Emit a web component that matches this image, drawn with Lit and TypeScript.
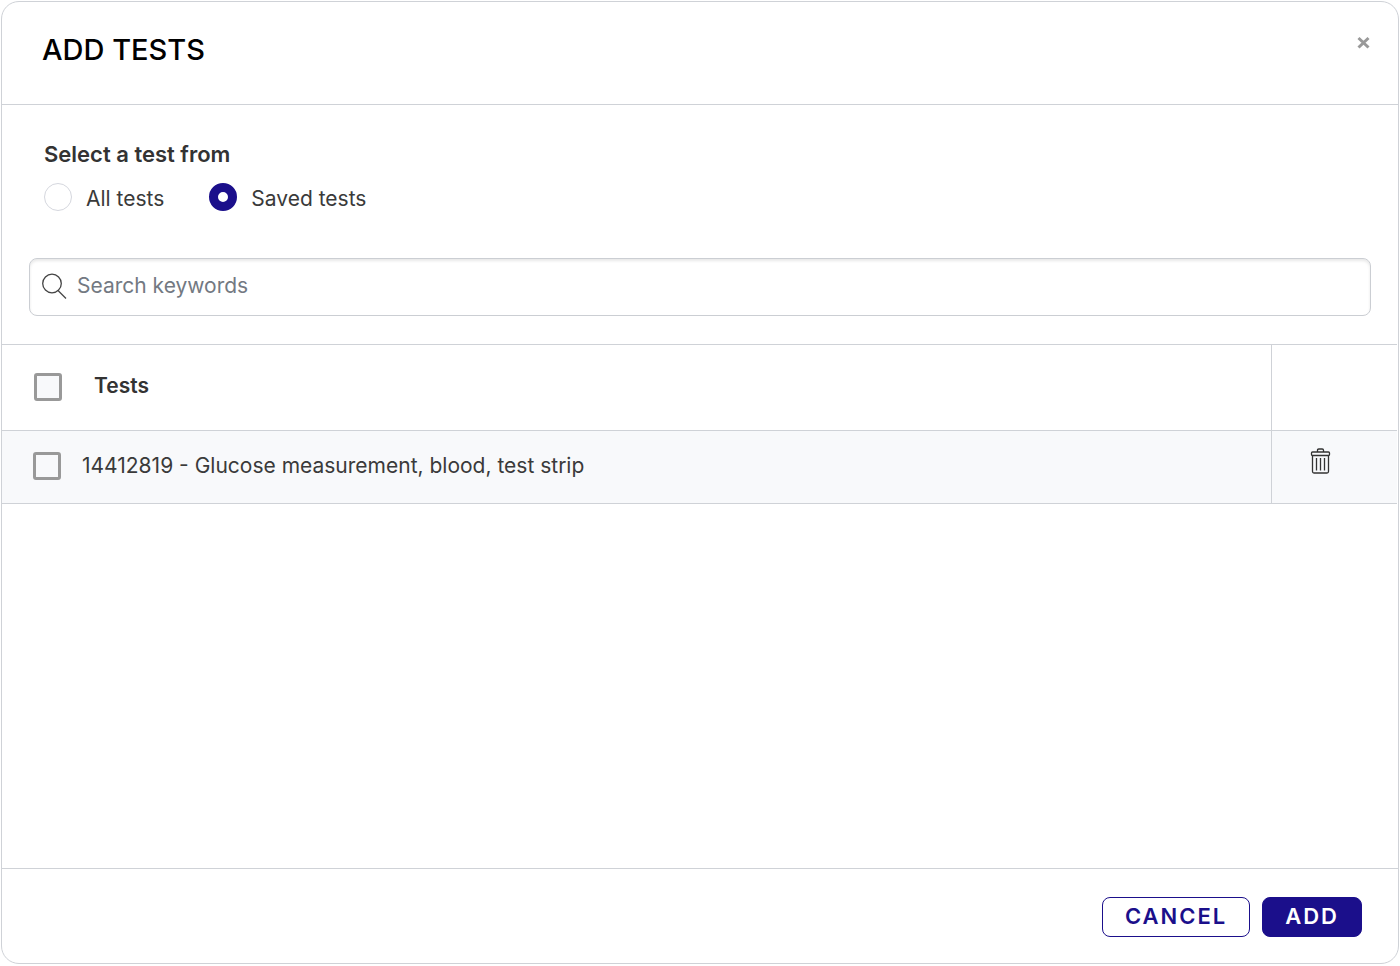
import { LitElement, html, css } from "lit";
import { customElement, property, state } from "lit/decorators.js";

interface TestItem {
  code: string;
  name: string;
}

@customElement("test-table")
class TestTable extends LitElement {
  @property({ attribute: false }) tests: TestItem[] = [];

  static styles = css`
    :host {
      display: block;
      border-top: 1px solid #cfd2d7;
      margin-right: 1px;
    }
    table {
      width: 100%;
      border-collapse: separate;
      border-spacing: 0;
      table-layout: fixed;
    }
    th,
    td {
      padding: 0;
      text-align: left;
      border-bottom: 1px solid #cfd2d7;
      font-size: 21px;
      line-height: 28px;
      color: #333;
    }
    .action {
      width: 125px;
      border-left: 1px solid #cfd2d7;
    }
    .head,
    .item {
      display: flex;
      align-items: center;
      box-sizing: border-box;
      padding-bottom: 2px;
    }
    .head {
      height: 85px;
      padding-left: 32px;
      gap: 32px;
      font-weight: 600;
    }
    .item {
      height: 72px;
      padding-left: 31px;
      gap: 21px;
    }
    tbody td {
      background: #f8f9fb;
      color: #3a3a3a;
    }
    .label {
      padding-bottom: 1px;
    }
    .box {
      appearance: none;
      flex: none;
      width: 28px;
      height: 28px;
      margin: 0;
      border: 3px solid #999;
      border-radius: 3px;
      background: #f8f9fb;
    }
    .box:checked {
      background: #1b0f8b;
    }
    .delete {
      display: block;
      margin: 0 0 10px 38px;
      padding: 0;
      border: 0;
      background: none;
      line-height: 0;
      cursor: pointer;
    }
  `;

  render() {
    return html`
      <table>
        <thead>
          <tr>
            <th>
              <div class="head">
                <input class="box" type="checkbox" id="all" aria-label="Select all tests" />
                <label class="label" for="all">Tests</label>
              </div>
            </th>
            <th class="action"></th>
          </tr>
        </thead>
        <tbody>
          ${this.tests.map(
            (t) => html`
              <tr>
                <td>
                  <div class="item">
                    <input class="box" type="checkbox" id="t${t.code}" />
                    <label class="label" for="t${t.code}">${t.code} - ${t.name}</label>
                  </div>
                </td>
                <td class="action">
                  <button class="delete" type="button" aria-label="Delete test">
                    <svg width="21" height="28" viewBox="0 0 21 28" fill="none" stroke="#333">
                      <path d="M7.5 4V2.3Q7.5 1 8.8 1H12.2Q13.5 1 13.5 2.3V4" stroke-width="1.3" />
                      <rect x="1.5" y="4" width="18" height="3.5" rx="1" stroke-width="1.3" />
                      <path d="M2.5 7.5V23.5Q2.5 25 4 25H17Q18.5 25 18.5 23.5V7.5" stroke-width="1.3" />
                      <path d="M6.5 10V22.5M10.5 10V22.5M14.5 10V22.5" stroke-width="1.3" />
                    </svg>
                  </button>
                </td>
              </tr>
            `
          )}
        </tbody>
      </table>
    `;
  }
}

@customElement("app-root")
class AppRoot extends LitElement {
  @state() private source = "saved";

  private tests: TestItem[] = [
    { code: "14412819", name: "Glucose measurement, blood, test strip" },
  ];

  static styles = css`
    :host {
      display: flex;
      box-sizing: border-box;
      min-height: 100vh;
      padding: 1px 1px 2px;
      background: #fff;
      color: #3a3a3a;
      font-family: Inter, "Liberation Sans", sans-serif;
      font-size: 21px;
      line-height: 28px;
    }
    .dialog {
      flex: 1;
      display: flex;
      flex-direction: column;
      border: 1px solid #cfd2d7;
      border-radius: 18px;
      overflow: hidden;
    }
    header {
      display: flex;
      justify-content: space-between;
      align-items: flex-start;
      padding: 30px 28px 36px 40px;
      border-bottom: 1px solid #cfd2d7;
    }
    h1 {
      margin: 0;
      font-size: 29px;
      line-height: 36px;
      font-weight: 500;
      color: #000;
    }
    button {
      font-family: inherit;
      cursor: pointer;
    }
    .close {
      margin-top: 4px;
      padding: 0;
      border: 0;
      background: none;
      line-height: 0;
    }
    main {
      flex: 1;
    }
    fieldset {
      margin: 0;
      padding: 35px 42px 0;
      border: 0;
    }
    legend {
      float: left;
      width: 100%;
      padding: 0;
      font-size: 22px;
      font-weight: 600;
      color: #333;
    }
    .options {
      clear: both;
      display: flex;
      gap: 45px;
      padding-top: 15px;
    }
    .option {
      display: flex;
      gap: 14px;
    }
    .option span {
      padding-top: 2px;
    }
    .option input {
      appearance: none;
      width: 28px;
      height: 28px;
      margin: 0;
      border: 1px solid #d5d7de;
      border-radius: 50%;
      background: #fff;
    }
    .option input:checked {
      border: 9px solid #1b0f8b;
    }
    .search {
      display: flex;
      align-items: center;
      gap: 8px;
      height: 56px;
      margin: 45px 27px 28px;
      padding: 0 10px;
      border: 1px solid #cbced3;
      border-radius: 8px;
      box-shadow: inset 0 2px 3px #00000018;
    }
    .search svg {
      flex: none;
    }
    .search input {
      flex: 1;
      min-width: 0;
      padding: 0 0 2px;
      border: 0;
      outline: 0;
      background: none;
      font: inherit;
      color: #3a3a3a;
    }
    .search input::placeholder {
      color: #737982;
      opacity: 1;
    }
    footer {
      display: flex;
      justify-content: flex-end;
      gap: 12px;
      padding: 28px 36px 26px;
      border-top: 1px solid #cfd2d7;
    }
    .btn {
      height: 40px;
      padding: 0 22px 2px;
      border: 1px solid #1b0f8b;
      border-radius: 8px;
      background: #fff;
      color: #1b0f8b;
      font-size: 22px;
      font-weight: 600;
      letter-spacing: 2px;
    }
    .primary {
      background: #1b0f8b;
      color: #fff;
    }
  `;

  private option(value: string, label: string) {
    return html`
      <label class="option">
        <input
          type="radio"
          name="source"
          value=${value}
          .checked=${this.source === value}
          @change=${() => (this.source = value)}
        />
        <span>${label}</span>
      </label>
    `;
  }

  render() {
    return html`
      <section class="dialog" role="dialog" aria-labelledby="title">
        <header>
          <h1 id="title">ADD TESTS</h1>
          <button class="close" type="button" aria-label="Close">
            <svg width="13" height="13" viewBox="0 0 13 13" stroke="#999" stroke-width="3">
              <path d="M1.5 2L11.5 11.5M11.5 2L1.5 11.5" />
            </svg>
          </button>
        </header>
        <main>
          <fieldset>
            <legend>Select a test from</legend>
            <div class="options">
              ${this.option("all", "All tests")} ${this.option("saved", "Saved tests")}
            </div>
          </fieldset>
          <label class="search">
            <svg width="29" height="29" viewBox="0 0 29 29" fill="none" stroke="#444" stroke-width="1.3">
              <circle cx="12" cy="10.5" r="9.3" />
              <path d="M18 17.5L26 25.5" />
            </svg>
            <input type="search" placeholder="Search keywords" aria-label="Search keywords" />
          </label>
          <test-table .tests=${this.tests}></test-table>
        </main>
        <footer>
          <button class="btn" type="button">CANCEL</button>
          <button class="btn primary" type="button">ADD</button>
        </footer>
      </section>
    `;
  }
}
